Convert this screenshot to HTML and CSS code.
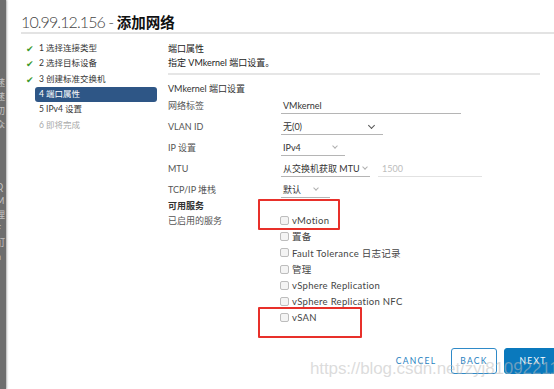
FILE: index.html
```html
<!DOCTYPE html>
<html lang="zh-CN">
<head>
    <meta charset="UTF-8">
    <title>添加网络</title>
    <link rel="stylesheet" href="styles.css">
</head>
<body>
    <div class="backdrop">
        <span>(</span>
        <span class="bd-gap">蒁</span>
        <span>蒁</span>
        <span>初</span>
        <span>众</span>
        <span>s</span>
        <span class="bd-gap2">Q</span>
        <span>M</span>
        <span>理</span>
        <span>F</span>
        <span>酊</span>
        <span>n</span>
    </div>

    <div class="dialog">
        <div class="dialog-title">
            <span class="host">10.99.12.156 - </span><span class="name">添加网络</span>
        </div>

        <div class="dialog-body">
            <ul class="steps">
                <li class="step done"><span class="check">&#10004;</span><span class="step-text">1 选择连接类型</span></li>
                <li class="step done"><span class="check">&#10004;</span><span class="step-text">2 选择目标设备</span></li>
                <li class="step done"><span class="check">&#10004;</span><span class="step-text">3 创建标准交换机</span></li>
                <li class="step active"><span class="check"></span><span class="step-text">4 端口属性</span></li>
                <li class="step"><span class="check"></span><span class="step-text">5 IPv4 设置</span></li>
                <li class="step disabled"><span class="check"></span><span class="step-text">6 即将完成</span></li>
            </ul>

            <div class="content">
                <div class="page-head">
                    <div class="page-title">端口属性</div>
                    <div class="page-desc">指定 VMkernel 端口设置。</div>
                </div>

                <div class="section-title">VMkernel 端口设置</div>

                <div class="form-row">
                    <label class="form-label">网络标签</label>
                    <div class="field text-field wide">VMkernel</div>
                </div>
                <div class="form-row">
                    <label class="form-label">VLAN ID</label>
                    <div class="field select vlan">无(0)<span class="chev dark"></span></div>
                </div>
                <div class="form-row">
                    <label class="form-label">IP 设置</label>
                    <div class="field select ip">IPv4<span class="chev"></span></div>
                </div>
                <div class="form-row">
                    <label class="form-label">MTU</label>
                    <div class="field select mtu">从交换机获取 MTU<span class="chev"></span></div>
                    <div class="field text-field mtu-value">1500</div>
                </div>
                <div class="form-row">
                    <label class="form-label">TCP/IP 堆栈</label>
                    <div class="field select stack">默认<span class="chev"></span></div>
                </div>

                <div class="services-title">可用服务</div>
                <div class="services">
                    <div class="form-label">已启用的服务</div>
                    <ul class="service-list">
                        <li><span class="box"></span>vMotion</li>
                        <li><span class="box"></span>置备</li>
                        <li><span class="box"></span>Fault Tolerance 日志记录</li>
                        <li><span class="box"></span>管理</li>
                        <li><span class="box"></span>vSphere Replication</li>
                        <li><span class="box"></span>vSphere Replication NFC</li>
                        <li><span class="box"></span>vSAN</li>
                    </ul>
                    <div class="mark mark-vmotion"></div>
                    <div class="mark mark-vsan"></div>
                </div>

                <div class="actions">
                    <button class="btn btn-link">CANCEL</button>
                    <button class="btn btn-outline">BACK</button>
                    <button class="btn btn-primary">NEXT</button>
                </div>
            </div>
        </div>
    </div>

    <div class="watermark">https://blog.csdn.net/zyj81092211</div>
</body>
</html>
```

FILE: styles.css
```css
body {
    margin: 0;
    width: 554px;
    height: 389px;
    overflow: hidden;
    display: flex;
    background-color: #fff;
    font-family: Lato, "Noto Sans CJK SC", sans-serif;
    color: #333;
    position: relative;
}

ul {
    list-style: none;
    margin: 0;
    padding: 0;
}

/* grey page behind the dialog */
.backdrop {
    width: 6px;
    flex-shrink: 0;
    background-color: #6e6e6e;
    color: #c4c4c4;
    font-size: 9px;
    line-height: 14px;
    display: flex;
    flex-direction: column;
    overflow: hidden;
    box-shadow: 1px 0 2px rgba(0, 0, 0, 0.3);
    padding-top: 2px;
}

.backdrop span {
    margin-left: -4px;
}

.bd-gap {
    margin-top: 60px;
}

.bd-gap2 {
    margin-top: 34px;
}

.dialog {
    flex: 1;
    padding-left: 15px;
    display: flex;
    flex-direction: column;
}

.dialog-title {
    height: 34px;
    box-sizing: border-box;
    padding-top: 12px;
    font-size: 14.5px;
    line-height: 20px;
    border-bottom: 2px solid #e3e3e3;
    white-space: nowrap;
}

.host {
    color: #444;
    font-weight: 300;
    font-size: 16px;
    letter-spacing: -0.9px;
}

.name {
    color: #111;
    font-weight: 700;
}

.dialog-body {
    display: flex;
    flex: 1;
}

/* wizard steps */
.steps {
    width: 147px;
    flex-shrink: 0;
    padding-top: 7px;
}

.step {
    display: grid;
    grid-template-columns: 14px 122px;
    height: 15.3px;
    align-items: center;
    font-size: 8.5px;
    color: #333;
}

.check {
    color: #3d9a2f;
    font-size: 9px;
    padding-left: 5px;
}

.step-text {
    padding-left: 4px;
    height: 15px;
    line-height: 15px;
    border-radius: 3px;
    white-space: nowrap;
}

.step.active .step-text {
    background-color: #2e5686;
    color: #fff;
}

.step.disabled .step-text {
    color: #a9a9a9;
}

/* right side */
.content {
    flex: 1;
    display: flex;
    flex-direction: column;
    padding-top: 8px;
}

.page-head {
    font-size: 9px;
    line-height: 14px;
    color: #222;
    padding-bottom: 3px;
    border-bottom: 2px solid #e6e6e6;
    margin-right: 14px;
}

.section-title {
    font-size: 9px;
    line-height: 12px;
    margin-top: 8px;
    color: #333;
}

.form-row {
    display: flex;
    align-items: center;
    height: 21px;
}

.form-label {
    width: 113px;
    flex-shrink: 0;
    font-size: 9px;
    color: #555;
}

.field {
    font-size: 9px;
    color: #333;
    height: 16px;
    line-height: 15px;
    box-sizing: border-box;
    border-bottom: 1px solid #b5b5b5;
    padding-left: 2px;
    position: relative;
    white-space: nowrap;
}

.wide {
    width: 180px;
}

.vlan {
    width: 102px;
}

.ip {
    width: 64px;
}

.mtu {
    width: 89px;
}

.stack {
    width: 49px;
}

.mtu-value {
    width: 104px;
    margin-left: 8px;
    padding-left: 4px;
    color: #bdbdbd;
    border-bottom-color: #e2e2e2;
}

.chev {
    position: absolute;
    right: 8px;
    top: 4px;
    width: 3px;
    height: 3px;
    border-right: 1px solid #b0b0b0;
    border-bottom: 1px solid #b0b0b0;
    transform: rotate(45deg);
}

.chev.dark {
    width: 4px;
    height: 4px;
    right: 9px;
    border-color: #555;
}

.mtu .chev {
    right: 3px;
}

.stack .chev {
    right: 12px;
}

.services-title {
    font-size: 9px;
    font-weight: 700;
    color: #333;
    line-height: 13px;
    margin-top: -1px;
}

.services {
    display: flex;
    position: relative;
}

.services .form-label {
    line-height: 16px;
    padding-top: 1px;
}

.service-list li {
    display: flex;
    align-items: center;
    height: 16.3px;
    font-size: 9.5px;
    color: #444;
    letter-spacing: 0.3px;
}

.box {
    width: 7px;
    height: 7px;
    border: 1px solid #bdbdbd;
    border-radius: 2px;
    background-color: #f4f4f4;
    margin-right: 3px;
    margin-left: -1px;
}

/* red annotation boxes */
.mark {
    position: absolute;
    border: 2px solid #e8302a;
    border-radius: 1px;
}

.mark-vmotion {
    left: 90px;
    top: -13px;
    width: 78px;
    height: 27px;
}

.mark-vsan {
    left: 90px;
    top: 95px;
    width: 100px;
    height: 27px;
}

.actions {
    display: flex;
    align-items: center;
    margin-top: 22px;
    margin-left: 222px;
    margin-right: -30px;
}

.btn {
    font-family: Lato, sans-serif;
    font-size: 8.5px;
    letter-spacing: 1.3px;
    height: 26px;
    border-radius: 3px;
    padding: 0;
    box-sizing: border-box;
    cursor: pointer;
}

.btn-link {
    background: none;
    border: none;
    color: #1f7fbf;
    width: 52px;
}

.btn-outline {
    background: #fff;
    border: 1px solid #2f8ac8;
    color: #1f7fbf;
    width: 46px;
    margin-left: 9px;
}

.btn-primary {
    background-color: #0a79bd;
    border: 1px solid #0a79bd;
    color: #fff;
    width: 58px;
    margin-left: 7px;
}

.watermark {
    position: absolute;
    left: 310px;
    top: 359px;
    font-family: "Liberation Sans", Arial, sans-serif;
    font-size: 17px;
    letter-spacing: -0.1px;
    color: rgba(190, 190, 190, 0.55);
    white-space: nowrap;
}
```
